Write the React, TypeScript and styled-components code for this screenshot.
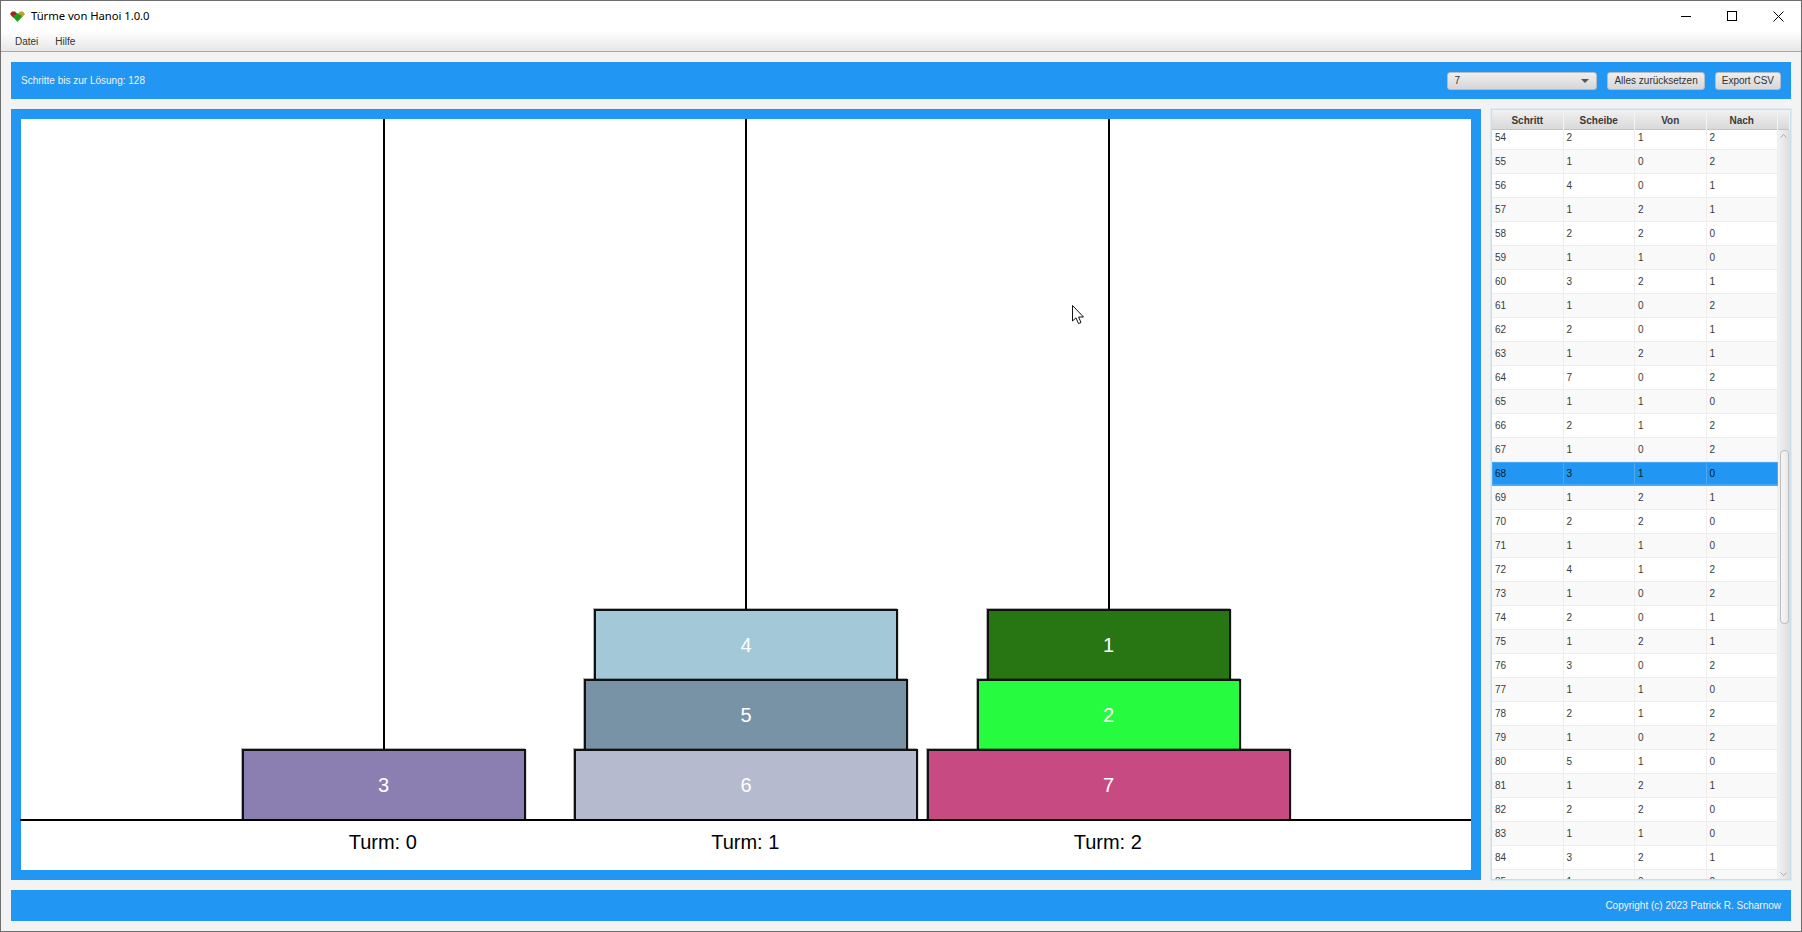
import React from "react";
import styled, { createGlobalStyle } from "styled-components";

const Global = createGlobalStyle`
  html, body { margin: 0; padding: 0; background: #f3f3f3; overflow: hidden; }
  * { box-sizing: border-box; }
`;

const UI = `"Liberation Sans", Arial, sans-serif`;

const Window = styled.div`
  width: 1802px; height: 932px; display: flex; flex-direction: column;
  border: 1px solid #6e6e6e; background: #f3f3f3; font-family: ${UI};
`;
const TitleBar = styled.div`
  height: 30px; flex: none; background: #fff; display: flex; align-items: center; padding-left: 9px;
`;
const AppIcon = styled.svg`width: 15px; height: 11px; margin: 1px 6px 0 0; flex: none;`;
const Title = styled.span`
  font: 11.3px "Noto Sans", "Open Sans", sans-serif; color: #000; letter-spacing: -0.05px; margin-bottom: 2px;
`;
const WindowControls = styled.div`margin-left: auto; display: flex; height: 100%;`;
const ControlButton = styled.div`
  width: 46px; height: 100%; display: flex; align-items: center; justify-content: center;
  svg { display: block; }
`;
const MenuBar = styled.div`
  height: 21px; flex: none; display: flex; align-items: center; gap: 17px; padding: 1px 0 0 14px;
  background: linear-gradient(#ffffff, #e7e7e7);
  border-bottom: 1px solid #a9a9a9;
`;
const MenuItem = styled.span`font-size: 10px; color: #333;`;
const Content = styled.div`
  flex: 1; min-height: 0; display: flex; flex-direction: column; gap: 10px; padding: 10px;
`;
const TopBar = styled.div`
  height: 37px; flex: none; background: #2196f3; display: flex; align-items: center;
  padding: 0 10px; gap: 10px;
`;
const Steps = styled.span`font-size: 10px; color: #f4f4f4; margin-right: auto;`;
const Combo = styled.div`
  width: 150px; height: 18px; border: 1px solid #b4bcc4; border-radius: 3px;
  background: linear-gradient(#efefef, #d6d6d6); display: flex; align-items: center;
  padding: 0 6px; font-size: 10px; color: #333; justify-content: space-between;
`;
const ComboArrow = styled.span`
  width: 0; height: 0; border-left: 4px solid transparent; border-right: 4px solid transparent;
  border-top: 4px solid #555; margin-right: 1px;
`;
const Button = styled.div`
  height: 18px; border: 1px solid #b4bcc4; border-radius: 3px; padding: 0 6px;
  background: linear-gradient(#efefef, #d6d6d6); display: flex; align-items: center;
  font-size: 10px; color: #333; white-space: nowrap;
`;
const Middle = styled.div`flex: 1; min-height: 0; display: flex; gap: 10px;`;
const BoardFrame = styled.div`
  width: 1470px; flex: none; border: 10px solid #2196f3; background: #fff; position: relative;
  display: flex; flex-direction: column;
`;
const Stage = styled.div`
  height: 702px; flex: none; display: grid; grid-template-columns: repeat(3, 362.5px);
  padding-left: 181.25px;
`;
const Tower = styled.div`display: flex; flex-direction: column; align-items: center; height: 100%;`;
const Pole = styled.div`width: 2px; flex: 1; background: #000;`;
const Disc = styled.div<{ $width: number; $color: string }>`
  width: ${(p) => p.$width}px; height: 72px; flex: none; margin-top: -2px;
  background: ${(p) => p.$color}; border: 2px solid #111;
  display: flex; align-items: center; justify-content: center;
  color: #fff; font-size: 20px;
  box-shadow: -1px -1px 0 rgba(0, 0, 0, 0.3), 1px 0 0 rgba(0, 0, 0, 0.12);
`;
const Baseline = styled.div`
  height: 2px; flex: none; background: #000; margin: -2px 0 0 -1px; position: relative;
`;
const Labels = styled.div`
  display: grid; grid-template-columns: repeat(3, 362.5px); padding: 10px 0 0 180.5px;
`;
const TowerLabel = styled.div`text-align: center; font-size: 20px; line-height: 23px; color: #000;`;
const Cursor = styled.svg`position: absolute; left: 1051px; top: 186px; width: 13px; height: 20px;`;

const TablePanel = styled.div`
  width: 300px; flex: none; border: 1px solid #c6dfea; box-shadow: 0 0 0 1px #dcecf3;
  background: #fff; display: flex; flex-direction: column; overflow: hidden;
`;
const HeaderRow = styled.div`
  height: 20px; flex: none; display: grid; grid-template-columns: repeat(4, 71.5px) 12px;
  background: linear-gradient(#f1f1f1, #d9d9d9); border-bottom: 1px solid #c4c4c4;
`;
const HeaderCell = styled.div`
  font-size: 10px; font-weight: bold; color: #3a3a3a; text-align: center; line-height: 21px;
  border-right: 1px solid #f4f4f4;
`;
const TableBody = styled.div`flex: 1; min-height: 0; display: flex;`;
const Rows = styled.div`width: 286px; flex: none; overflow: hidden;`;
const RowsShift = styled.div`margin-top: -4px;`;
const Row = styled.div<{ $odd: boolean; $selected: boolean }>`
  height: 24px; display: grid; grid-template-columns: repeat(4, 71.5px);
  background: ${(p) => (p.$selected ? "#2196f3" : p.$odd ? "#f9f9f9" : "#ffffff")};
  border-bottom: 1px solid ${(p) => (p.$selected ? "#4aa9f5" : "#eeeeee")};
  box-shadow: ${(p) => (p.$selected ? "inset 0 0 0 1px #4aa9f5" : "none")};
`;
const Cell = styled.div<{ $selected: boolean }>`
  font-size: 10px; line-height: 23px; padding-left: 3px;
  color: ${(p) => (p.$selected ? "#0a1a28" : "#3a3a3a")};
  border-right: 1px solid ${(p) => (p.$selected ? "#4aa9f5" : "#eeeeee")};
`;
const ScrollBar = styled.div`
  width: 12px; flex: none; background: linear-gradient(90deg, #f2f2f2, #dddddd);
  display: flex; flex-direction: column; align-items: center; position: relative;
`;
const ArrowIcon = styled.svg<{ $bottom?: boolean }>`
  width: 7px; height: 4px; position: absolute; left: 2px;
  ${(p) => (p.$bottom ? "bottom: 3px;" : "top: 4px;")}
`;
const Thumb = styled.div`
  width: 9px; height: 174px; margin-top: 320px; margin-left: 1px; border: 1px solid #bdbdbd;
  border-radius: 4px; background: linear-gradient(90deg, #f6f6f6, #e9e9e9);
`;
const Footer = styled.div`
  height: 31px; flex: none; background: #2196f3; display: flex; align-items: center;
  justify-content: flex-end; padding: 0 10px; font-size: 10px; color: #f4f4f4;
`;

const towers = [
  [{ n: 3, c: "#8a7fb0" }],
  [{ n: 4, c: "#a3c9d8" }, { n: 5, c: "#7993a6" }, { n: 6, c: "#b6bace" }],
  [{ n: 1, c: "#277513" }, { n: 2, c: "#27fb3f" }, { n: 7, c: "#c84a82" }],
];

const moves: [number, number, number, number][] = [
  [54,2,1,2],[55,1,0,2],[56,4,0,1],[57,1,2,1],[58,2,2,0],[59,1,1,0],[60,3,2,1],[61,1,0,2],
  [62,2,0,1],[63,1,2,1],[64,7,0,2],[65,1,1,0],[66,2,1,2],[67,1,0,2],[68,3,1,0],[69,1,2,1],
  [70,2,2,0],[71,1,1,0],[72,4,1,2],[73,1,0,2],[74,2,0,1],[75,1,2,1],[76,3,0,2],[77,1,1,0],
  [78,2,1,2],[79,1,0,2],[80,5,1,0],[81,1,2,1],[82,2,2,0],[83,1,1,0],[84,3,2,1],[85,1,0,2],
];

export default function App() {
  return (
    <Window>
      <Global />
      <TitleBar>
        <AppIcon viewBox="0 0 15 11">
          <path d="M0 3 L2 0.5 L5 0.5 L7.5 3 L7.5 8 L3 6.5 Z" fill="#a8201c" />
          <path d="M7.5 3 L10 0.5 L13 0.5 L15 3 L12 6.5 L7.5 8 Z" fill="#b9a52a" />
          <path d="M3.5 4.5 L7.5 2.5 L11.5 4.5 L11.5 6.5 L7.5 11 L3.5 6.5 Z" fill="#1f9a1f" />
        </AppIcon>
        <Title>Türme von Hanoi 1.0.0</Title>
        <WindowControls>
          <ControlButton>
            <svg width="10" height="10" viewBox="0 0 10 10"><path d="M0 5.5H10" stroke="#000" /></svg>
          </ControlButton>
          <ControlButton>
            <svg width="10" height="10" viewBox="0 0 10 10"><rect x=".5" y=".5" width="9" height="9" fill="none" stroke="#000" /></svg>
          </ControlButton>
          <ControlButton>
            <svg width="11" height="11" viewBox="0 0 11 11"><path d="M.5 .5L10.5 10.5M10.5 .5L.5 10.5" stroke="#000" /></svg>
          </ControlButton>
        </WindowControls>
      </TitleBar>
      <MenuBar>
        <MenuItem>Datei</MenuItem>
        <MenuItem>Hilfe</MenuItem>
      </MenuBar>
      <Content>
        <TopBar>
          <Steps>Schritte bis zur Lösung: 128</Steps>
          <Combo>7<ComboArrow /></Combo>
          <Button>Alles zurücksetzen</Button>
          <Button>Export CSV</Button>
        </TopBar>
        <Middle>
          <BoardFrame>
            <Stage>
              {towers.map((discs, i) => (
                <Tower key={i}>
                  <Pole />
                  {discs.map((d) => (
                    <Disc key={d.n} $width={224 + 20 * d.n} $color={d.c}>{d.n}</Disc>
                  ))}
                </Tower>
              ))}
            </Stage>
            <Baseline />
            <Labels>
              {towers.map((_, i) => <TowerLabel key={i}>Turm: {i}</TowerLabel>)}
            </Labels>
            <Cursor viewBox="0 0 13 20">
              <path d="M.5 .5V16L4 12.8L6.5 18.6L9 17.5L6.6 12H11.5Z" fill="#fff" stroke="#111" strokeWidth="1" />
            </Cursor>
          </BoardFrame>
          <TablePanel>
            <HeaderRow>
              {["Schritt", "Scheibe", "Von", "Nach"].map((h) => <HeaderCell key={h}>{h}</HeaderCell>)}
              <HeaderCell />
            </HeaderRow>
            <TableBody>
              <Rows>
                <RowsShift>
                  {moves.map((m) => {
                    const sel = m[0] === 68;
                    return (
                      <Row key={m[0]} $odd={m[0] % 2 === 1} $selected={sel}>
                        {m.map((v, i) => <Cell key={i} $selected={sel}>{v}</Cell>)}
                      </Row>
                    );
                  })}
                </RowsShift>
              </Rows>
              <ScrollBar>
                <ArrowIcon viewBox="0 0 7 4"><path d="M.5 3.5L3.5 .5L6.5 3.5" fill="none" stroke="#aaa" /></ArrowIcon>
                <Thumb />
                <ArrowIcon $bottom viewBox="0 0 7 4"><path d="M.5 .5L3.5 3.5L6.5 .5" fill="none" stroke="#aaa" /></ArrowIcon>
              </ScrollBar>
            </TableBody>
          </TablePanel>
        </Middle>
        <Footer>Copyright (c) 2023 Patrick R. Scharnow</Footer>
      </Content>
    </Window>
  );
}
